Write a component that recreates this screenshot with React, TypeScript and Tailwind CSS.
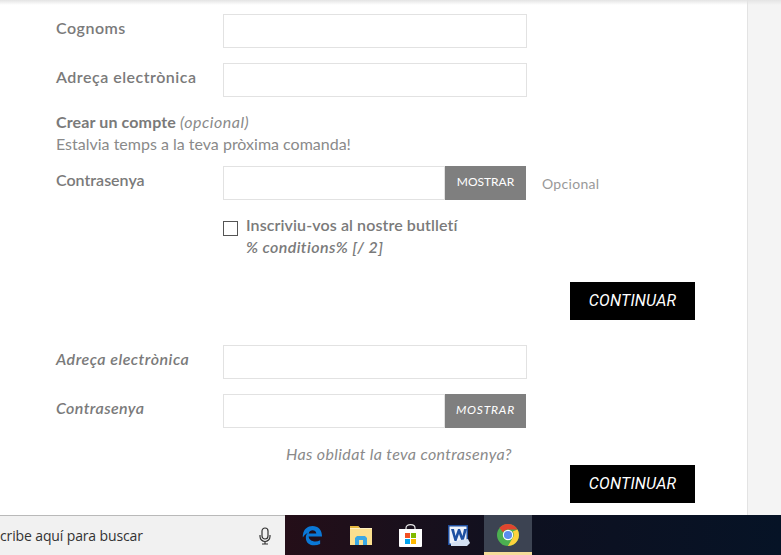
const rale = "font-['Lato','Liberation_Sans',sans-serif]";

function Field({ label, italic = false }: { label: string; italic?: boolean }) {
  return (
    <div className="flex h-[34px] items-start">
      <label className={`w-[167px] pt-1 text-base leading-5 font-semibold tracking-[0.5px] text-[#7a7a7a] ${italic ? "italic" : ""}`}>
        {label}
      </label>
      <input className="h-[34px] w-[304px] border border-[#e2e2e2] bg-white" />
    </div>
  );
}

function PasswordField({ italic = false, hint }: { italic?: boolean; hint?: string }) {
  return (
    <div className="flex h-[34px] items-start">
      <label className={`w-[167px] pt-1 text-base leading-5 font-semibold text-[#7a7a7a] ${italic ? "italic tracking-[0.4px]" : ""}`}>
        Contrasenya
      </label>
      <input className="h-[34px] w-[222px] border border-[#e2e2e2] bg-white" />
      <button className={`h-[34px] w-[81px] bg-[#7f7f7f] pb-0.5 text-xs text-white ${italic ? "italic tracking-[0.8px]" : ""}`}>MOSTRAR</button>
      {hint && <span className="pt-2 pl-4 text-sm leading-5 tracking-[0.3px] text-[#999999]">{hint}</span>}
    </div>
  );
}

function SubmitButton() {
  return (
    <div className="flex justify-end pr-[52px]">
      <button className="h-[38px] w-[125px] bg-black font-['Roboto',sans-serif] text-base tracking-[0.2px] text-white italic">CONTINUAR</button>
    </div>
  );
}

function EdgeIcon() {
  return (
    <svg width="21" height="21" viewBox="0 0 22 22">
      <path
        d="M1 10C2 4 6 1 11 1c6 0 10 4 10 11H7c0 4 6 7 12 4v4c-7 3-15 1-15-7 0-2 1-4 2-5-2 1-4 3-5 5-.3-1-.2-2 0-3Zm6-1h8c0-4-7-5-8 0Z"
        fill="#0a78d7"
      />
    </svg>
  );
}

function FolderIcon() {
  return (
    <svg width="22" height="19" viewBox="0 0 22 19">
      <path d="M0 0h8l2 2h12v17H0Z" fill="#fbdf8e" />
      <path d="M0 0h8l2 2H0Z" fill="#e6b83f" />
      <path d="M0 2h22v1H0Z" fill="#fff0c0" />
      <path d="M5 19v-7l2-2h8l2 2v7h-4v-5H9v5Z" fill="#3aa7e4" />
    </svg>
  );
}

function StoreIcon() {
  return (
    <svg width="23" height="23" viewBox="0 0 23 23">
      <path d="M7 6V4C7 1.500 9 .7 11.500 .7S16 1.500 16 4v2" fill="none" stroke="#e8e8e8" strokeWidth="1.200" />
      <path d="M0 5h23v17a1 1 0 0 1-1 1H1a1 1 0 0 1-1-1Z" fill="#ffffff" />
      <rect x="6" y="9" width="5" height="5" fill="#f25022" />
      <rect x="12" y="9" width="5" height="5" fill="#7fba00" />
      <rect x="6" y="15" width="5" height="5" fill="#00a4ef" />
      <rect x="12" y="15" width="5" height="5" fill="#ffb900" />
    </svg>
  );
}

function WordIcon() {
  return (
    <svg width="22" height="21" viewBox="0 0 22 21">
      <rect x="0" y="0" width="20" height="20" fill="#1f4e9e" />
      <rect x="1.500" y="1.500" width="17" height="17" fill="#eef3fb" />
      <path d="M3 4h3l1.500 7L10 4h2l2.500 7L16 4h3l-3.500 12h-2L11 9l-2.500 7h-2Z" fill="#1d50a2" />
      <path d="M3 18l9-3 8-1 2 4-3 3H3Z" fill="#d5e1f3" />
    </svg>
  );
}

function ChromeIcon() {
  return (
    <svg width="22" height="22" viewBox="0 0 22 22">
      <circle cx="11" cy="11" r="11" fill="#4caf50" />
      <path d="M11 0a11 11 0 0 1 9.500 5.500H11A5.500 5.500 0 0 0 6 8.500L2.500 3.800A11 11 0 0 1 11 0Z" fill="#e0452f" />
      <path d="M20.500 5.500A11 11 0 0 1 11 22l4.700-8.200A5.500 5.500 0 0 0 15.700 7.500Z" fill="#fdd23c" />
      <circle cx="11" cy="11" r="5.200" fill="#ffffff" />
      <circle cx="11" cy="11" r="4.100" fill="#5a8df0" />
    </svg>
  );
}

export default function App() {
  return (
    <div className={`flex h-[555px] w-[781px] flex-col overflow-hidden bg-white ${rale}`}>
      <div className="relative flex h-[515px] shrink-0">
        <div className="absolute inset-x-0 top-0 h-[5px] bg-gradient-to-b from-[#e4e4e4] to-transparent" />
        <main className="w-[747px] shrink-0 pt-[14px] pl-[56px]">
          <div className="flex flex-col gap-[15px]">
            <Field label="Cognoms" />
            <Field label="Adreça electrònica" />
          </div>
          <div className="pt-[14px] text-base leading-[22px] text-[#7a7a7a]">
            <div>
              <span className="font-bold tracking-[0.13px]">Crear un compte</span>{" "}
              <span className="font-normal tracking-[0.5px] text-[#8a8a8a] italic">(opcional)</span>
            </div>
            <div className="font-normal text-[#8a8a8a]">Estalvia temps a la teva pròxima comanda!</div>
          </div>
          <div className="pt-[11px]">
            <PasswordField hint="Opcional" />
          </div>
          <div className="flex pt-[14px] pl-[167px]">
            <span className="mt-[7px] h-[15px] w-[15px] border border-[#555555] bg-white" />
            <div className="pl-2 text-base leading-[22px] font-semibold text-[#7a7a7a]">
              <div className="tracking-[0.1px]">Inscriviu-vos al nostre butlletí</div>
              <div className="tracking-[0.4px] italic">% conditions% [/ 2]</div>
            </div>
          </div>
          <div className="pt-6">
            <SubmitButton />
          </div>
          <div className="flex flex-col gap-[15px] pt-[25px]">
            <Field label="Adreça electrònica" italic />
            <PasswordField italic />
          </div>
          <div className="pt-4 pl-[230px] text-base leading-5 font-normal tracking-[0.36px] text-[#8a8a8a] italic">
            Has oblidat la teva contrasenya?
          </div>
          <div className="pt-px">
            <SubmitButton />
          </div>
        </main>
        <aside className="flex-1 border-l border-[#e3e3e3] bg-[#f4f4f4]" />
      </div>
      <footer className="flex h-10 shrink-0 bg-[#0a0f1e]">
        <div className="flex w-[285px] items-center overflow-hidden border-t border-[#b9b9b9] bg-[#f1f1f1] font-['Open_Sans',sans-serif] text-sm tracking-[-0.13px] text-[#333333]">
          <span className="flex-1 whitespace-nowrap">cribe aquí para buscar</span>
          <svg className="mr-[14px]" width="12" height="18" viewBox="0 0 12 18" fill="none" stroke="#333333" strokeWidth="1.200">
            <rect x="3" y="1" width="6" height="11" rx="3" />
            <path d="M1 8v1.500a5 5 0 0 0 10 0V8M6 14.500V17M3 17h6" />
          </svg>
        </div>
        <div className="flex flex-1 gap-px bg-gradient-to-r from-[#240e18] via-[#0d1020] to-[#061326] pl-[3px]">
          <div className="flex h-10 w-12 items-center justify-center"><EdgeIcon /></div>
          <div className="flex h-10 w-12 items-center justify-center"><FolderIcon /></div>
          <div className="flex h-10 w-12 items-center justify-center"><StoreIcon /></div>
          <div className="flex h-10 w-12 items-center justify-center"><WordIcon /></div>
          <div className="flex h-10 w-12 items-center justify-center border-b-[3px] border-[#f5dc9a] bg-[#3c4352] pt-[3px]"><ChromeIcon /></div>
        </div>
      </footer>
    </div>
  );
}
